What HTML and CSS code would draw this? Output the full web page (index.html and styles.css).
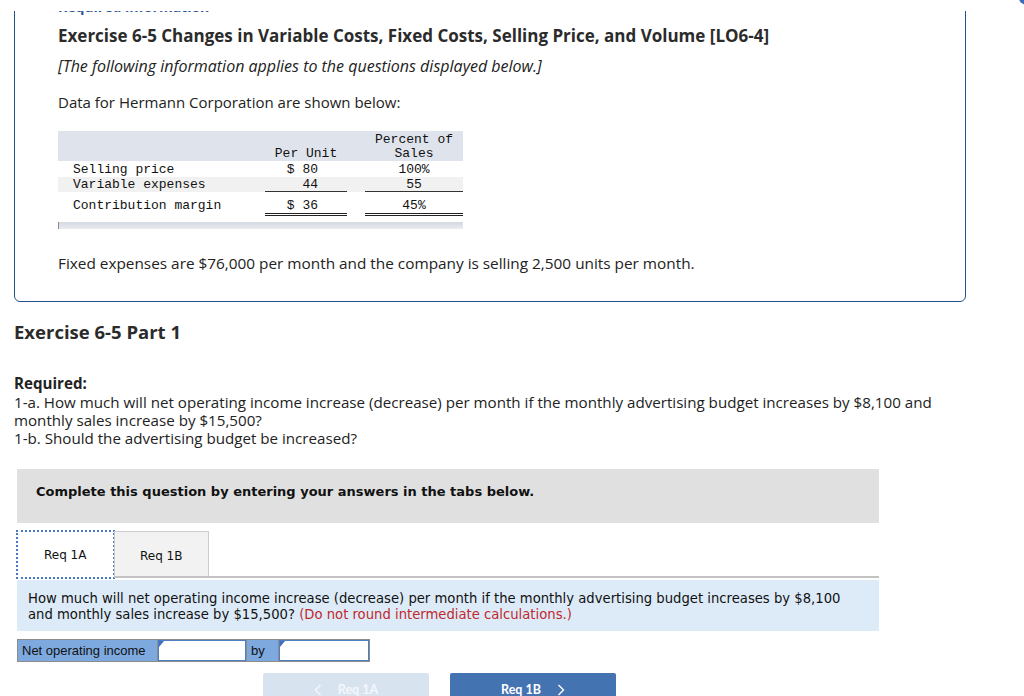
FILE: index.html
```html
<!DOCTYPE html>
<html>
<head>
<meta charset="utf-8">
<link rel="stylesheet" href="styles.css">
</head>
<body>
<div class="topbar"><span class="topdot"></span></div>
<div class="page">
  <div class="infobox">
    <div class="req-head">Required information</div>
    <div class="ex-title">Exercise 6-5 Changes in Variable Costs, Fixed Costs, Selling Price, and Volume [LO6-4]</div>
    <div class="ex-note">[The following information applies to the questions displayed below.]</div>
    <div class="ex-data">Data for Hermann Corporation are shown below:</div>
    <table class="cm">
      <tr class="hdr">
        <td class="c1"></td>
        <td class="c2">Per Unit</td>
        <td class="sp"></td>
        <td class="c3">Percent of<br>Sales</td>
      </tr>
      <tr class="r1">
        <td class="c1">Selling price</td>
        <td class="c2">$ 80</td>
        <td class="sp"></td>
        <td class="c3">100%</td>
      </tr>
      <tr class="r2">
        <td class="c1">Variable expenses</td>
        <td class="c2 ul">44</td>
        <td class="sp"></td>
        <td class="c3 ul">55</td>
      </tr>
      <tr class="r3">
        <td class="c1">Contribution margin</td>
        <td class="c2 dul">$ 36</td>
        <td class="sp"></td>
        <td class="c3 dul">45%</td>
      </tr>
    </table>
    <div class="cm-foot"></div>
    <div class="ex-fixed">Fixed expenses are $76,000 per month and the company is selling 2,500 units per month.</div>
  </div>

  <div class="part-title">Exercise 6-5 Part 1</div>

  <div class="required">
    <div class="req-label">Required:</div>
    <div>1-a. How much will net operating income increase (decrease) per month if the monthly advertising budget increases by $8,100 and monthly sales increase by $15,500?</div>
    <div>1-b. Should the advertising budget be increased?</div>
  </div>

  <div class="widget">
    <div class="complete">Complete this question by entering your answers in the tabs below.</div>
    <div class="tabs">
      <div class="tab active">Req 1A</div>
      <div class="tab">Req 1B</div>
      <div class="tab-rest"></div>
    </div>
    <div class="qpanel">
      <div>How much will net operating income increase (decrease) per month if the monthly advertising budget increases by $8,100</div>
      <div class="qline2"><span>and monthly sales increase by $15,500?</span> <span class="warn">(Do not round intermediate calculations.)</span></div>
    </div>
    <div class="answer">
      <div class="a-label">Net operating income</div>
      <div class="a-input"><span class="flag"></span></div>
      <div class="a-label a-by">by</div>
      <div class="a-input a-input2"><span class="flag"></span></div>
    </div>
    <div class="nav">
      <div class="navbtn prev"><svg class="chev" width="8" height="12" viewBox="0 0 8 12"><polyline points="6.5,1 1.5,6 6.5,11" fill="none" stroke="currentColor" stroke-width="1.4"/></svg><span>Req 1A</span></div>
      <div class="navbtn next"><span>Req 1B</span><svg class="chev chev-r" width="8" height="12" viewBox="0 0 8 12"><polyline points="1.5,1 6.5,6 1.5,11" fill="none" stroke="currentColor" stroke-width="1.4"/></svg></div>
    </div>
  </div>
</div>
</body>
</html>
```

FILE: styles.css
```css
html, body {
  margin: 0;
  padding: 0;
  background: #ffffff;
  overflow: hidden;
}
body {
  font-family: "Open Sans", "Liberation Sans", sans-serif;
  color: #222222;
}
.topbar {
  position: fixed;
  top: 0;
  left: 0;
  right: 0;
  height: 11px;
  background: #ffffff;
  z-index: 5;
}
.topdot {
  position: absolute;
  top: -13px;
  right: -12px;
  width: 18px;
  height: 18px;
  border-radius: 50%;
  background: #3d6cb3;
}
.page {
  margin-top: -20px;
  padding-left: 14px;
}
.infobox {
  width: 952px;
  border: 1px solid #25508e;
  border-radius: 6px;
  padding: 16px 0 28px 43px;
  box-sizing: border-box;
}
.req-head {
  font-size: 14px;
  line-height: 20px;
  font-weight: 700;
  color: #2a5592;
}
.ex-title {
  margin-top: 9px;
  font-size: 17px;
  line-height: 20px;
  font-weight: 700;
  color: #2b2b2b;
}
.ex-note {
  margin-top: 10px;
  font-size: 16px;
  line-height: 20px;
  font-style: italic;
}
.ex-data {
  margin-top: 16px;
  font-size: 15px;
  line-height: 20px;
}
.cm {
  margin-top: 19px;
  border-collapse: collapse;
  font-family: "Liberation Mono", monospace;
  font-size: 13px;
  color: #111111;
  width: 405px;
}
.cm td {
  padding: 0;
  white-space: nowrap;
}
.cm .c1 { width: 192px; padding-left: 15px; }
.cm .c2 { width: 53px; padding-right: 29px; text-align: right; }
.cm .sp { width: 18px; }
.cm .c3 { width: 98px; text-align: center; }
.cm .hdr td {
  background: #dfe4ec;
  vertical-align: bottom;
  padding-top: 2px;
  line-height: 14px;
}
.cm .hdr .c2 { text-align: center; padding-right: 0; }
.cm .r1 td { line-height: 14px; padding-top: 2px; }
.cm .r2 td {
  background: #f1f1f1;
  line-height: 13px;
  padding-top: 1px;
  border-bottom: 1px solid transparent;
}
.cm .r2 td.ul { border-bottom: 1px solid #333333; }
.cm .r3 td {
  line-height: 15px;
  padding-top: 6px;
  padding-bottom: 0;
  border-bottom: 3px double transparent;
}
.cm .r3 td.c2 { padding-right: 29px; }
.cm .r3 td.c1 { padding-left: 15px; }
.cm .r3 td.dul { border-bottom: 3px double #222222; }
.cm-foot {
  margin-top: 6px;
  width: 404px;
  height: 7px;
  border-left: 1px solid #8a8a8a;
  background: linear-gradient(#d4d9e1, #e9ecf1);
}
.ex-fixed {
  margin-top: 24px;
  font-size: 15.35px;
  line-height: 20px;
}
.part-title {
  margin-top: 20px;
  font-size: 18.5px;
  line-height: 20px;
  font-weight: 700;
  color: #2b2b2b;
}
.required {
  margin-top: 32px;
  font-size: 15.15px;
  line-height: 18px;
  width: 935px;
}
.req-label { font-weight: 700; line-height: 19px; }
.widget {
  margin-top: 22px;
  margin-left: 3px;
  width: 862px;
  font-family: "DejaVu Sans", Verdana, sans-serif;
}
.complete {
  height: 54px;
  box-sizing: border-box;
  padding: 15px 0 0 19px;
  background: #e0e0e0;
  font-size: 13px;
  line-height: 16px;
  font-weight: 700;
  color: #111111;
}
.tabs {
  margin-top: 8px;
  display: flex;
  height: 47px;
}
.tab {
  box-sizing: border-box;
  font-size: 12px;
  line-height: 45px;
  padding-top: 2px;
  color: #111111;
  background: #f2f2f2;
  border: 1px solid #cccccc;
  border-bottom: 2px solid #c2c2c2;
  width: 95px;
  padding-left: 25px;
}
.tab.active {
  width: 97px;
  background: #ffffff;
  border: none;
  outline: 2px dotted #4a78c2;
  outline-offset: -1px;
  padding-left: 27px;
  line-height: 45px;
}
.tab-rest {
  flex: 1;
  border-bottom: 2px solid #c2c2c2;
}
.qpanel {
  margin-top: 2px;
  background: #ddebf8;
  padding: 11px 30px 8px 11px;
  font-size: 13.2px;
  line-height: 16px;
  color: #111111;
  white-space: nowrap;
}
.warn { color: #c0282d; }
.answer {
  margin-top: 8px;
  display: flex;
  width: 353px;
  height: 23px;
  border: 1px solid #8c8c8c;
  box-sizing: border-box;
  background: #8c8c8c;
  gap: 1px;
  font-family: "Liberation Sans", Arial, sans-serif;
}
.a-label {
  background: #7ea9de;
  font-size: 13px;
  line-height: 21px;
  padding-left: 4px;
  width: 135px;
  color: #111111;
}
.a-by { width: 27px; }
.a-input {
  position: relative;
  width: 88px;
  background: #ffffff;
  border: 1px solid #4e7ec4;
  box-sizing: border-box;
}
.a-input2 { flex: 1; }
.flag {
  position: absolute;
  left: 0;
  top: 0;
  width: 0;
  height: 0;
  border-top: 6px solid #3e70c0;
  border-right: 5px solid transparent;
}
.nav {
  margin-top: 11px;
  margin-left: 246px;
  display: flex;
  gap: 21px;
}
.navbtn {
  width: 166px;
  height: 36px;
  box-sizing: border-box;
  padding-top: 9px;
  display: flex;
  justify-content: center;
  align-items: flex-start;
  font-family: "Lato", "Liberation Sans", sans-serif;
  font-size: 12.5px;
  line-height: 16px;
  font-weight: 700;
  color: #ffffff;
  border-radius: 2px 2px 0 0;
}
.prev { background: #d8e3f0; color: #f4f7fb; }
.next { background: #4473b2; }
.chev {
  margin-top: 2px;
  margin-right: 16px;
  flex: none;
}
.chev-r { margin-right: 0; margin-left: 16px; }
```
